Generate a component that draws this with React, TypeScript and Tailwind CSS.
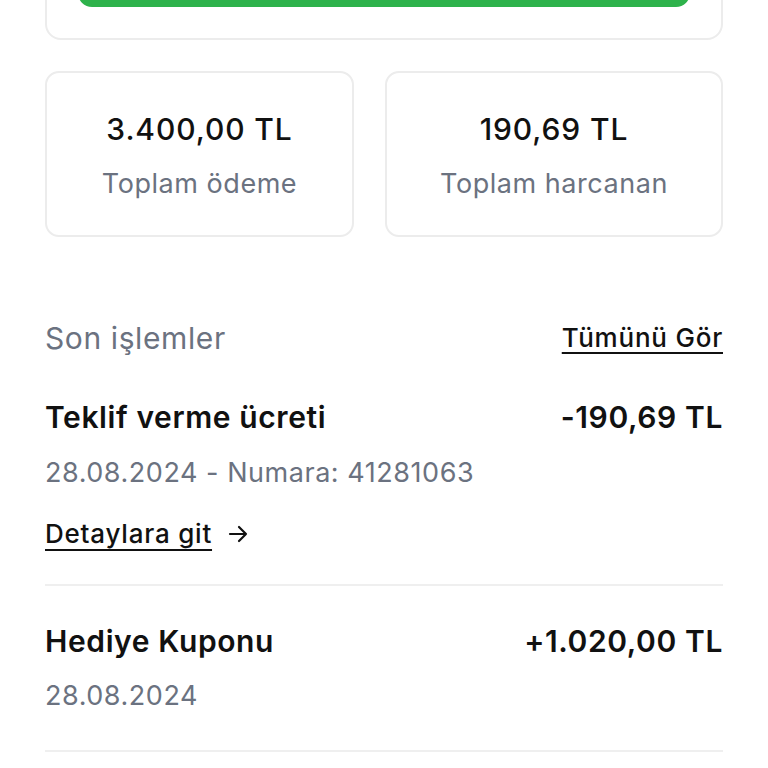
import React from "react";

function Stat({ value, label, className }: { value: string; label: string; className: string }) {
  return (
    <div className={`${className} h-[166px] rounded-[14px] border-2 border-[#ececec] bg-white flex flex-col items-center pt-[37px]`}>
      <div className="text-[30px] leading-[38px] font-medium tracking-[0.03em] text-[#111]">{value}</div>
      <div className="mt-[19px] text-[27px] leading-[34px] tracking-[0.02em] text-[#6b7280]">{label}</div>
    </div>
  );
}

export default function App() {
  return (
    <div
      className="w-[768px] h-[768px] overflow-hidden bg-white"
      style={{ fontFamily: "Inter, 'Noto Sans', sans-serif" }}
    >
      <div className="px-[45px]">
        <div className="mt-[-67px] rounded-[16px] border-2 border-[#ececec] px-[31px] pt-[22px] pb-[31px]">
          <div className="h-[50px] rounded-[14px] bg-[#2eb24b]" />
        </div>
        <div className="mt-[31px] flex gap-[31px]">
          <Stat className="w-[309px]" value="3.400,00 TL" label="Toplam ödeme" />
          <Stat className="flex-1" value="190,69 TL" label="Toplam harcanan" />
        </div>
        <div className="mt-[82px] flex items-center justify-between">
          <div className="text-[30px] leading-[38px] tracking-[0.02em] text-[#6b7280]">Son işlemler</div>
          <div className="text-[26px] leading-[34px] font-medium tracking-[0.03em] text-[#111] underline underline-offset-[5px] decoration-[2px]">
            Tümünü Gör
          </div>
        </div>
        <div className="mt-[41px] flex items-center justify-between">
          <div className="text-[30px] leading-[38px] font-semibold tracking-[0.02em] text-[#111]">Teklif verme ücreti</div>
          <div className="text-[30px] leading-[38px] font-semibold tracking-[0.02em] text-[#111]">-190,69 TL</div>
        </div>
        <div className="mt-[18px] text-[27px] leading-[38px] tracking-[0.02em] text-[#6b7280]">28.08.2024 - Numara: 41281063</div>
        <div className="mt-[23px] flex items-center gap-[14px] text-[26px] leading-[38px] font-medium tracking-[0.03em] text-[#111]">
          <span className="underline underline-offset-[6px] decoration-[2px]">Detaylara git</span>
          <svg width="24" height="24" viewBox="0 0 24 24" fill="none" stroke="#111" strokeWidth="2.2" strokeLinecap="round" strokeLinejoin="round">
            <path d="M4 12h16M13 5l7 7-7 7" />
          </svg>
        </div>
        <div className="mt-[31px] h-[2px] bg-[#efefef]" />
        <div className="mt-[36px] flex items-center justify-between">
          <div className="text-[30px] leading-[38px] font-semibold tracking-[0.02em] text-[#111]">Hediye Kuponu</div>
          <div className="text-[30px] leading-[38px] font-semibold tracking-[0.02em] text-[#111]">+1.020,00 TL</div>
        </div>
        <div className="mt-[17px] text-[27px] leading-[38px] tracking-[0.02em] text-[#6b7280]">28.08.2024</div>
        <div className="mt-[35px] h-[2px] bg-[#efefef]" />
      </div>
    </div>
  );
}
